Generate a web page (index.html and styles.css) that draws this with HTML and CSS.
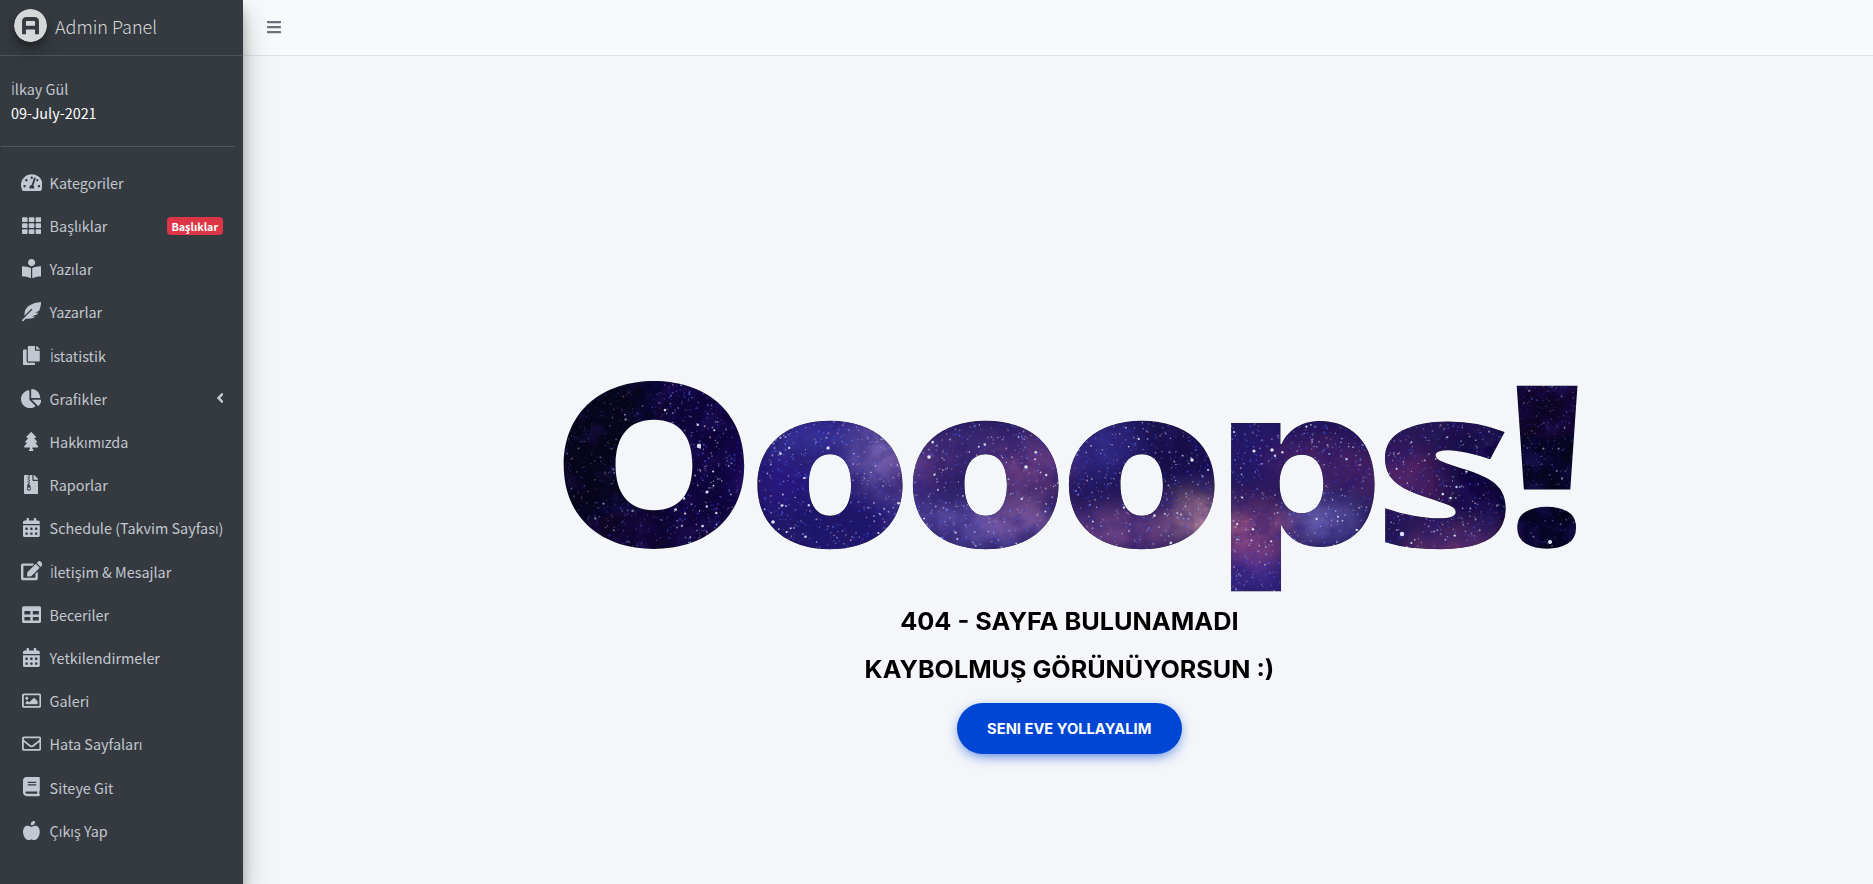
FILE: index.html
```html
<!DOCTYPE html>
<html lang="tr">
<head>
<meta charset="utf-8">
<title>Admin Panel</title>
<link rel="stylesheet" href="styles.css">
</head>
<body>
<div class="layout">
  <aside class="sidebar">
    <a class="brand">
      <svg class="brand-logo" viewBox="0 0 33 33"><circle cx="16.5" cy="16.5" r="16.5" fill="#d6d7d9"/><path d="M10 25.2V12.6Q10 10 12.6 10h7.8Q23 10 23 12.6v12.6M10 18.6h13" fill="none" stroke="#343a40" stroke-width="3.9"/></svg>
      <span class="brand-text">Admin Panel</span>
    </a>
    <div class="user">
      <a class="user-name"><span class="dotted">İ</span>lkay Gül</a>
      <span class="user-date">09-July-2021</span>
    </div>
    <nav class="nav" id="nav"></nav>
  </aside>
  <div class="page">
    <header class="topbar">
      <svg class="bars" viewBox="0 0 448 512"><path d="M16 132h416c8.800 0 16-7.200 16-16V76c0-8.800-7.200-16-16-16H16C7.200 60 0 67.200 0 76v40c0 8.800 7.200 16 16 16zm0 160h416c8.800 0 16-7.200 16-16v-40c0-8.800-7.200-16-16-16H16c-8.800 0-16 7.200-16 16v40c0 8.800 7.200 16 16 16zm0 160h416c8.800 0 16-7.200 16-16v-40c0-8.800-7.200-16-16-16H16c-8.800 0-16 7.200-16 16v40c0 8.800 7.200 16 16 16z"/></svg>
    </header>
    <main class="notfound">
      <svg class="oops" viewBox="0 0 1040 230">
        <defs>
          <clipPath id="frame"><rect width="1040" height="230"/></clipPath>
          <filter id="soft" x="-50%" y="-50%" width="200%" height="200%"><feGaussianBlur stdDeviation="14"/></filter>
          <filter id="cloud" x="0" y="0" width="100%" height="100%">
            <feTurbulence type="fractalNoise" baseFrequency="0.04" numOctaves="5" seed="8"/>
            <feColorMatrix values="0 0 0 0 0.02  0 0 0 0 0.01  0 0 0 0 0.14  2.6 0 0 0 -1.0"/>
          </filter>
        </defs>
        <g id="word"></g>
        <g class="galaxy" clip-path="url(#frame)">
          <rect width="1040" height="230" fill="#1a1150"/>
          <g filter="url(#soft)" id="nebula"></g>
          <rect width="1040" height="230" filter="url(#cloud)" opacity=".5"/>
          <g id="stars"></g>
        </g>
      </svg>
      <h2 class="message first">404 - SAYFA BULUNAMADI</h2>
      <h2 class="message second">KAYBOLMUŞ GÖRÜNÜYORSUN :)</h2>
      <a class="home"><span class="home-label">SENI EVE YOLLAYALIM</span></a>
    </main>
  </div>
</div>
<script src="page.js"></script>
</body>
</html>
```
FILE: styles.css
```css
* { box-sizing: border-box; }
body { margin: 0; background: #f4f6f9; font-family: "Noto Sans CJK SC", "Open Sans", sans-serif; overflow: hidden; }
.layout { display: flex; height: 884px; }
.sidebar {
  width: 243px; flex: none; background: #343a40; color: #c2c7d0; position: relative; z-index: 2;
  box-shadow: 0 14px 28px rgba(0,0,0,.25), 0 10px 10px rgba(0,0,0,.22);
}
.brand { display: flex; align-items: center; height: 56px; padding: 0 0 4px 14px; border-bottom: 1px solid #4b545c; }
.brand-logo { width: 33px; height: 33px; border-radius: 50%; box-shadow: 0 10px 20px rgba(0,0,0,.19), 0 6px 6px rgba(0,0,0,.23); }
.brand-text { margin: 1px 0 0 8px; font-family: "Noto Sans CJK SC Light", "Noto Sans CJK SC", sans-serif; font-size: 18px; font-weight: 300; color: #d6d8d9; white-space: nowrap; }
.user { margin: 0 8px 0 1px; height: 91px; padding: 21px 0 0 10px; border-bottom: 1px solid #4f5962; display: flex; flex-direction: column; font-size: 14.4px; line-height: 24px; }
.user-date { color: #fff; }
.dotted { font-family: "Open Sans", sans-serif; font-size: 13.6px; line-height: 1; display: inline-block; transform: scaleX(.9); }
.nav { padding: 15.400px 8px 0; }
.item { display: flex; align-items: center; height: 40px; margin-bottom: 3.200px; padding: 0 12px 0 10.500px; font-size: 14.4px; white-space: nowrap; }
.icon-box { width: 25.6px; height: 20px; flex: none; margin: 0 5.500px 0 0; display: flex; justify-content: center; align-items: center; }
.icon-box svg { height: 19.2px; fill: #c2c7d0; flex: none; }
.badge { margin-left: auto; background: #dc3545; color: #fff; font-size: 10.8px; font-weight: 700; line-height: 18px; height: 18px; padding: 0 4.8px; border-radius: 4px; }
.arrow { margin-left: auto; height: 16px; fill: #c2c7d0; }
.page { flex: 1; min-width: 0; display: flex; flex-direction: column; }
.topbar { height: 56px; flex: none; background: #f8f9fa; border-bottom: 1px solid #dee2e6; padding: 19px 0 0 24px; }
.bars { height: 16px; fill: #6c727a; display: block; }
.notfound { flex: 1; display: flex; flex-direction: column; align-items: center; padding: 314px 0 0 23px; }
.oops { width: 1040px; height: 230px; display: block; isolation: isolate; background: #f4f6f9; overflow: visible; }
.oops text { font-family: Inter, sans-serif; font-weight: 900; font-size: 223px; fill: #06051c; }
.oops .flared { font-family: "Open Sans", sans-serif; font-weight: 800; }
.galaxy { mix-blend-mode: lighten; }
.message { margin: 0; font-family: Inter, sans-serif; font-weight: 650; font-size: 24px; color: #000; line-height: 48px; white-space: nowrap; }
.first { margin-top: -2px; transform: scaleX(1.055); }
.second { transform: scaleX(1.048); }
.home { margin-top: 9px; width: 225px; height: 51px; border-radius: 26px; background: #0046d5; color: #fff; font: 700 14px/51px Inter, sans-serif; text-align: center; box-shadow: 0 4px 15px -5px #0046d5; }
.home-label { display: inline-block; transform: scaleX(1.05); }
```
FILE: page.js
```js
const calendar = 'M0 464c0 26.5 21.5 48 48 48h352c26.5 0 48-21.5 48-48V192H0v272z' +
  [320, 192, 64].map(x => [256, 384].map(y => `M${x} ${y + 12}c0-6.600 5.400-12 12-12h40c6.600 0 12 5.400 12 12v40c0 6.600-5.400 12-12 12h-40c-6.600 0-12-5.400-12-12z`).join('')).join('') +
  'M400 64h-48V16c0-8.800-7.200-16-16-16h-32c-8.800 0-16 7.200-16 16v48H160V16c0-8.800-7.200-16-16-16h-32c-8.800 0-16 7.200-16 16v48H48C21.500 64 0 85.500 0 112v48h448v-48c0-26.500-21.500-48-48-48z';
const cell = (x, y) => `M${x} ${y + 24}q0-24 24-24h101q24 0 24 24v80q0 24-24 24h-101q-24 0-24-24z`;
const grid = [0, 181.3, 363].map(x => [32, 192, 352].map(y => cell(x, y)).join('')).join('');
const items = [
  ['Kategoriler', 576, 'M288 32C128.940 32 0 160.940 0 320c0 52.800 14.250 102.260 39.060 144.800 5.610 9.620 16.300 15.200 27.440 15.200h443c11.140 0 21.830-5.580 27.440-15.200C561.750 422.260 576 372.800 576 320c0-159.060-128.940-288-288-288zm0 64c14.710 0 26.580 10.130 30.320 23.650-1.110 2.260-2.640 4.230-3.450 6.670l-9.220 27.670c-5.130 3.490-10.970 6.010-17.640 6.010-17.670 0-32-14.330-32-32S270.330 96 288 96zM96 384c-17.670 0-32-14.330-32-32s14.330-32 32-32 32 14.330 32 32-14.330 32-32 32zm48-160c-17.670 0-32-14.330-32-32s14.330-32 32-32 32 14.330 32 32-14.330 32-32 32zm246.770-72.410l-61.330 184C343.130 347.330 352 364.540 352 384c0 11.720-3.380 22.550-8.880 32H232.880c-5.500-9.450-8.880-20.280-8.880-32 0-33.940 26.500-61.430 59.900-63.590l61.340-184.010c4.170-12.560 17.730-19.450 30.360-15.170 12.570 4.190 19.350 17.790 15.170 30.360zm14.660 57.200l15.520-46.550c3.470-1.290 7.130-2.230 11.050-2.230 17.670 0 32 14.330 32 32s-14.330 32-32 32c-11.380-.010-20.890-6.280-26.570-15.220zM480 384c-17.670 0-32-14.330-32-32s14.330-32 32-32 32 14.330 32 32-14.330 32-32 32z'],
  ['Başlıklar', 512, grid, 'badge'],
  ['Yazılar', 512, 'M352 96c0-53.020-42.980-96-96-96s-96 42.980-96 96 42.980 96 96 96 96-42.980 96-96zM233.590 241.100c-59.330-36.320-155.430-46.300-203.790-49.050C13.550 191.130 0 203.510 0 219.140v222.800c0 14.330 11.590 26.280 26.490 27.050 43.660 2.290 131.990 10.680 193.040 41.430 9.370 4.720 20.480-1.710 20.480-11.870V252.560c-.010-4.670-2.320-8.950-6.420-11.460zm248.610-49.050c-48.350 2.740-144.460 12.730-203.780 49.050-4.100 2.510-6.410 6.960-6.410 11.630v245.790c0 10.190 11.140 16.630 20.540 11.900 61.040-30.720 149.320-39.110 192.970-41.400 14.900-.780 26.490-12.730 26.490-27.060V219.140c-.010-15.630-13.560-28.010-29.810-27.090z'],
  ['Yazarlar', 512, 'M512 0C460.220 3.560 96.440 38.200 71.010 287.610c-3.090 26.660-4.840 53.440-5.990 80.240l178.870-178.690c6.250-6.250 16.400-6.250 22.650 0s6.250 16.380 0 22.630L7.040 471.030c-9.380 9.370-9.380 24.570 0 33.940 9.380 9.370 24.590 9.370 33.980 0l57.130-57.070c42.090-.140 84.150-2.530 125.960-7.360 53.480-5.440 97.020-26.470 132.580-56.540H255.740l146.790-48.880c11.250-14.890 21.370-30.710 30.450-47.120h-81.140l106.540-53.210C500.290 132.860 510.190 26.260 512 0z'],
  ['İstatistik', 448, 'M320 448v40c0 13.255-10.745 24-24 24H24c-13.255 0-24-10.745-24-24V120c0-13.255 10.745-24 24-24h72v296c0 30.879 25.121 56 56 56h168zm0-344V0H152c-13.255 0-24 10.745-24 24v368c0 13.255 10.745 24 24 24h272c13.255 0 24-10.745 24-24V128H344c-13.200 0-24-10.800-24-24zm120.971-31.029L375.029 7.029A24 24 0 0 0 358.059 0H352v96h96v-6.059a24 24 0 0 0-7.029-16.970z'],
  ['Grafikler', 544, 'M527.790 288H290.500l158.030 158.030c6.040 6.040 15.980 6.530 22.190.680 38.700-36.460 65.320-85.610 73.130-140.860 1.340-9.460-6.510-17.850-16.060-17.850zm-15.830-64.800C503.720 103.740 408.260 8.280 288.800.040 279.680-.590 272 7.100 272 16.240V240h223.770c9.140 0 16.820-7.680 16.190-16.800zM224 288V50.710c0-9.550-8.390-17.400-17.840-16.060C86.990 51.490-4.100 155.600.140 280.370 4.500 408.510 114.830 513.590 243.030 511.980c50.400-.630 96.970-16.870 135.260-44.030 7.900-5.600 8.420-17.230 1.570-24.080L224 288z', 'arrow'],
  ['Hakkımızda', 384, 'M378.310 378.490L298.420 288h30.630c9.010 0 16.980-5 20.780-13.060 3.800-8.040 2.550-17.260-3.280-24.050L268.420 160h28.890c9.100 0 17.300-5.350 20.860-13.610 3.520-8.130 1.860-17.590-4.240-24.080L203.660 4.830c-6.030-6.450-17.280-6.450-23.320 0L70.060 122.310c-6.100 6.490-7.750 15.950-4.240 24.080C69.380 154.650 77.590 160 86.690 160h28.890l-78.140 90.910c-5.810 6.780-7.060 15.990-3.270 24.040C37.970 283 45.930 288 54.950 288h30.630L5.690 378.490c-6 6.790-7.360 16.090-3.560 24.260 3.750 8.050 12 13.250 21.010 13.250H160v24.450l-30.290 48.400c-5.320 10.640 2.420 23.160 14.310 23.160h95.960c11.890 0 19.630-12.520 14.310-23.160L224 440.450V416h136.860c9.010 0 17.260-5.200 21.010-13.250 3.800-8.170 2.440-17.470-3.560-24.260z'],
  ['Raporlar', 384, 'M377 105L279.100 7c-4.500-4.500-10.600-7-17-7H256v128h128v-6.100c0-6.300-2.500-12.400-7-16.900zM128.400 336c-17.900 0-32.400 12.100-32.400 27 0 15 14.600 27 32.500 27s32.400-12.100 32.400-27-14.600-27-32.500-27zM224 136V0h-63.600v32h-32V0H24C10.700 0 0 10.700 0 24v464c0 13.300 10.700 24 24 24h336c13.300 0 24-10.700 24-24V160H248c-13.200 0-24-10.800-24-24zM95.900 32h32v32h-32zm32.300 384c-33.200 0-58-30.400-51.400-62.900L96.400 256v-32h32v-32h-32v-32h32v-32h-32V96h32V64h32v32h-32v32h32v32h-32v32h32v32h-32v32h22.100c5.700 0 10.700 4.100 11.800 9.700l17.300 87.700c6.400 32.400-18.400 62.600-51.400 62.600z'],
  ['Schedule (Takvim Sayfası)', 448, calendar],
  ['İletişim & Mesajlar', 576, 'M402.600 83.200l90.200 90.200c3.800 3.800 3.800 10 0 13.800L274.400 405.600l-92.800 10.300c-12.400 1.400-22.900-9.100-21.500-21.500l10.300-92.800L388.800 83.200c3.800-3.800 10-3.800 13.800 0zm162-22.900l-48.800-48.800c-15.200-15.200-39.900-15.200-55.200 0l-35.400 35.400c-3.800 3.800-3.800 10 0 13.800l90.200 90.200c3.800 3.800 10 3.800 13.800 0l35.400-35.400c15.200-15.300 15.200-40 0-55.200zM384 346.200V448H64V128h229.800c3.200 0 6.200-1.300 8.500-3.500l40-40c7.600-7.600 2.200-20.500-8.500-20.500H48C21.500 64 0 85.500 0 112v352c0 26.500 21.500 48 48 48h352c26.500 0 48-21.500 48-48V306.200c0-10.700-12.900-16-20.500-8.500l-40 40c-2.200 2.300-3.500 5.300-3.500 8.500z'],
  ['Beceriler', 512, 'M464 32H48C21.490 32 0 53.490 0 80v352c0 26.510 21.490 48 48 48h416c26.510 0 48-21.490 48-48V80c0-26.510-21.490-48-48-48zM224 416H64v-96h160v96zm0-160H64v-96h160v96zm224 160H288v-96h160v96zm0-160H288v-96h160v96z'],
  ['Yetkilendirmeler', 448, calendar],
  ['Galeri', 512, 'M464 64H48C21.490 64 0 85.490 0 112v288c0 26.510 21.490 48 48 48h416c26.510 0 48-21.490 48-48V112c0-26.510-21.490-48-48-48zm-6 336H54a6 6 0 0 1-6-6V118a6 6 0 0 1 6-6h404a6 6 0 0 1 6 6v276a6 6 0 0 1-6 6zM128 152c-22.091 0-40 17.909-40 40s17.909 40 40 40 40-17.909 40-40-17.909-40-40-40zM96 352h320v-80l-87.515-87.515c-4.686-4.686-12.284-4.686-16.971 0L192 304l-39.515-39.515c-4.686-4.686-12.284-4.686-16.971 0L96 304v48z'],
  ['Hata Sayfaları', 512, 'M464 64H48C21.490 64 0 85.490 0 112v288c0 26.510 21.490 48 48 48h416c26.510 0 48-21.490 48-48V112c0-26.510-21.490-48-48-48zm0 48v40.805c-22.422 18.259-58.168 46.651-134.587 106.490-16.841 13.247-50.201 45.072-73.413 44.701-23.208.375-56.579-31.459-73.413-44.701C106.180 199.465 70.425 171.067 48 152.805V112h416zM48 400V214.398c22.914 18.251 55.409 43.862 104.938 82.646 21.857 17.205 60.134 55.186 103.062 54.955 42.717.231 80.509-37.199 103.053-54.947 49.528-38.783 82.032-64.401 104.947-82.653V400H48z'],
  ['Siteye Git', 448, 'M448 360V24c0-13.300-10.700-24-24-24H96C43 0 0 43 0 96v320c0 53 43 96 96 96h328c13.300 0 24-10.700 24-24v-16c0-7.500-3.500-14.300-8.900-18.700-4.200-15.400-4.200-59.300 0-74.700 5.400-4.300 8.900-11.100 8.900-18.600zM128 134c0-3.300 2.700-6 6-6h212c3.300 0 6 2.700 6 6v20c0 3.300-2.700 6-6 6H134c-3.300 0-6-2.700-6-6v-20zm0 64c0-3.300 2.700-6 6-6h212c3.300 0 6 2.700 6 6v20c0 3.300-2.700 6-6 6H134c-3.300 0-6-2.700-6-6v-20zm253.400 250H96c-17.700 0-32-14.300-32-32 0-17.600 14.400-32 32-32h285.400c-1.900 17.100-1.900 46.900 0 64z'],
  ['Çıkış Yap', 448, 'M350.850 129c25.970 4.670 47.270 18.670 63.920 42 14.650 20.670 24.640 46.670 29.960 78 4.670 28.670 4.320 57.330-1 86-7.990 47.330-23.970 87-47.940 119-28.640 38.670-64.590 58-107.870 58-10.660 0-22.300-3.330-34.960-10-8.660-5.330-18.310-8-28.970-8s-20.300 2.670-28.970 8c-12.660 6.670-24.300 10-34.960 10-43.280 0-79.230-19.330-107.870-58-23.970-32-39.950-71.670-47.940-119-5.320-28.670-5.670-57.330-1-86 5.320-31.330 15.310-57.330 29.960-78 16.650-23.330 37.950-37.330 63.920-42 15.980-2.670 37.950-.330 65.920 7 23.970 6.670 44.280 14.670 60.930 24 16.650-9.330 36.960-17.330 60.930-24 27.980-7.330 49.960-9.670 65.940-7zm-54.940-41c-9.320 8.670-21.650 15-36.960 19-10.660 3.330-22.300 5-34.960 5l-14.980-1c-1.330-9.330-1.330-20 0-32 2.670-24 10.320-42.330 22.970-55 9.320-8.670 21.650-15 36.960-19 10.660-3.330 22.300-5 34.960-5l14.980 1 1 15c0 12.670-1.670 24.330-4.990 35-3.990 15.330-10.310 27.670-18.980 37z']
];
const extras = {
  badge: '<span class="badge">Başlıklar</span>',
  arrow: '<svg class="arrow" viewBox="24 0 208 512"><path d="M31.700 239l136-136c9.400-9.400 24.600-9.400 33.900 0l22.600 22.600c9.400 9.400 9.400 24.600 0 33.900L127.900 256l96.400 96.400c9.400 9.400 9.400 24.600 0 33.900L201.700 409c-9.400 9.400-24.600 9.400-33.900 0l-136-136c-9.500-9.400-9.500-24.600-.1-34z"/></svg>'
};
const markup = label => label.replace('&', '&amp;').replace('İ', '<span class="dotted">İ</span>');
document.getElementById('nav').innerHTML = items.map(([label, w, d, extra]) =>
  `<a class="item"><span class="icon-box"><svg viewBox="0 0 ${w} 512"><path fill-rule="evenodd" d="${d}"/></svg></span><span>${markup(label)}</span>${extra ? extras[extra] : ''}</a>`).join('');

// Each letter is fitted to its ink box: [char, left, right, top, bottom, class]
const letters = [
  ['O', 13, 195, 11, 179], ['o', 206.5, 353, 51, 179], ['o', 362, 509, 51, 179], ['o', 518, 665, 51, 179],
  ['p', 681, 825.5, 51, 221], ['s', 834.5, 956.5, 51, 179, 'flared'], ['!', 965.5, 1027.5, 15, 179, 'flared']
];
const ctx = document.createElement('canvas').getContext('2d');
document.getElementById('word').innerHTML = letters.map(([ch, l, r, t, b, cls]) => {
  ctx.font = cls ? '800 223px "Open Sans", sans-serif' : '900 223px Inter, sans-serif';
  const m = ctx.measureText(ch);
  const sx = (r - l) / (m.actualBoundingBoxRight + m.actualBoundingBoxLeft);
  const sy = (b - t) / (m.actualBoundingBoxAscent + m.actualBoundingBoxDescent);
  const tx = l + m.actualBoundingBoxLeft * sx;
  const ty = t + m.actualBoundingBoxAscent * sy;
  return `<text class="${cls || ''}" transform="translate(${tx} ${ty}) scale(${sx} ${sy})">${ch}</text>`;
}).join('');

// [x, y, rx, ry, colour, opacity]
const clouds = [
  [50, 90, 65, 120, '#04030f', 1], [150, 90, 50, 110, '#0c0637', 1], [100, 180, 90, 40, '#090430', .9],
  [290, 110, 90, 80, '#2a1c8a', .8], [340, 85, 40, 35, '#7a68b4', .9], [260, 70, 50, 20, '#3c389c', .8], [285, 150, 60, 24, '#1d1260', .8],
  [430, 80, 80, 30, '#45307c', .8], [480, 100, 40, 25, '#7a4686', .8], [370, 95, 30, 18, '#6c3c80', .7],
  [430, 155, 80, 24, '#6a5ab4', .9], [470, 145, 40, 14, '#a06aa0', .7],
  [545, 75, 40, 30, '#3c329a', .8], [630, 85, 40, 40, '#150a48', .9], [570, 160, 60, 22, '#7c4a8c', .9], [650, 149, 24, 16, '#f0b0b8', 1],
  [700, 80, 40, 40, '#24166a', .8], [705, 160, 36, 22, '#b0588a', .9], [700, 205, 50, 22, '#3e2c8c', 1], [770, 95, 50, 30, '#4c2668', .9], [775, 152, 36, 14, '#8a80d8', 1],
  [890, 60, 70, 20, '#2a1658', .9], [860, 110, 50, 25, '#64286c', .9], [920, 100, 40, 40, '#10063a', .9], [900, 176, 50, 10, '#a04c80', 1],
  [1000, 100, 50, 130, '#05041a', 1], [1000, 40, 40, 30, '#08062c', .8]
];
document.getElementById('nebula').innerHTML = clouds.map(([x, y, rx, ry, c, o]) =>
  `<ellipse cx="${x}" cy="${y}" rx="${rx}" ry="${ry}" fill="${c}" opacity="${o}"/>`).join('');

let seed = 77;
const rnd = () => (seed = (seed * 16807) % 2147483647) / 2147483647;
const tints = ['#2c3cd0', '#3c54e0', '#6a80f0', '#9cb4f4', '#d8e4f4', '#c894b0'];
let stars = '';
for (let i = 0; i < 9500; i++) {
  const x = rnd() * 1040, y = rnd() * 230, k = rnd();
  const dim = x < 110 || x > 930 ? .55 : 1;
  const big = k > .978;
  const r = big ? .9 + rnd() * .5 : .5 + rnd() * .55;
  const c = big ? '#dfe8f4' : tints[Math.floor(Math.pow(rnd(), 1.4) * 6)];
  const o = (big ? .9 : .2 + rnd() * .6) * dim;
  stars += `<circle cx="${x.toFixed(1)}" cy="${y.toFixed(1)}" r="${r.toFixed(2)}" fill="${c}" opacity="${o.toFixed(2)}"/>`;
}
[[149, 76, 2.2], [157, 122, 1.5], [223, 152, 1.8], [278, 78, 1.6], [379, 87, 1.8], [476, 97, 1.8], [642, 90, 1.7], [722, 80, 1.7], [704, 81, 1.6], [852, 164, 2.2], [1000, 172, 2]].forEach(([x, y, r]) => {
  stars += `<circle cx="${x}" cy="${y}" r="${r}" fill="#dce6f6"/>`;
});
document.getElementById('stars').innerHTML = stars;
```
